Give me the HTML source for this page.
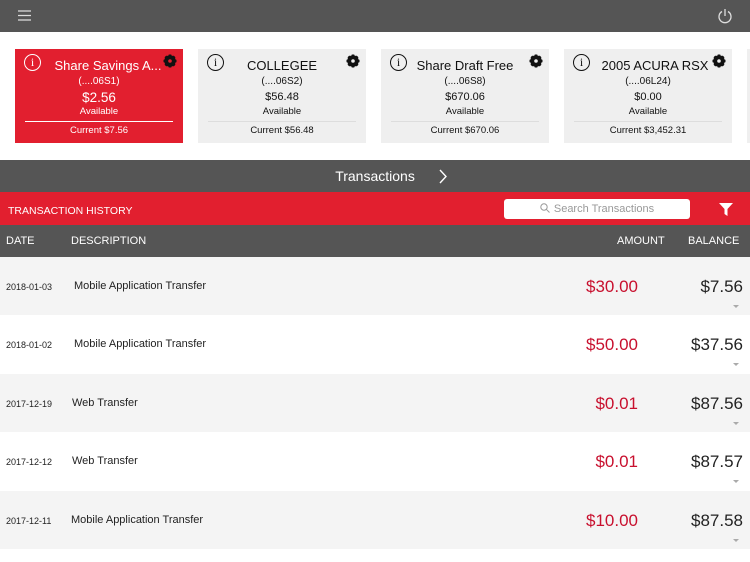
<!DOCTYPE html>
<html><head><meta charset="utf-8"><style>
*{margin:0;padding:0;box-sizing:border-box}
body{width:750px;height:562px;overflow:hidden;background:#fff;font-family:"Liberation Sans",Arial,sans-serif;position:relative}
.top{position:absolute;left:0;top:0;width:750px;height:32px;background:#555}
.card{position:absolute;top:49px;width:168px;height:94px;background:#efefef;color:#111;text-align:center}
.card.red{background:#e21f2f;color:#fff}
.card .t{position:absolute;top:9px;left:0;right:0;font-size:13px}
.card .n{position:absolute;top:27px;left:0;right:0;font-size:10px}
.card .a{position:absolute;top:41px;left:0;right:0;font-size:13.5px}
.card .av{position:absolute;top:57px;left:0;right:0;font-size:9.5px}
.card .ln{position:absolute;top:72px;left:10px;right:10px;height:1px;background:#ddd}
.card.red .ln{background:#fff}
.card .c{position:absolute;top:76px;left:0;right:0;font-size:9.5px}
.card .i{position:absolute;left:9px;top:5px;width:17px;height:17px;border:1px solid currentColor;border-radius:50%;font-size:12px;line-height:15px;font-family:"Liberation Serif",serif}
.card .g{position:absolute;right:6px;top:5px}
.bar{position:absolute;left:0;width:750px}
.row{position:absolute;left:0;width:750px;height:58px;color:#222}
.row .d{position:absolute;left:6px;top:25px;font-size:9px}
.row .ds{position:absolute;top:23px;font-size:11px}
.row .am{position:absolute;right:112px;top:20px;font-size:17px;color:#c8102e}
.row .b{position:absolute;right:7px;top:20px;font-size:17px;color:#222}
.row .tri{position:absolute;right:11px;top:48px;width:0;height:0;border-left:3px solid transparent;border-right:3px solid transparent;border-top:3px solid #aaa}
</style></head><body>
<svg width="0" height="0" style="position:absolute"><defs><g id="gear"><circle cx="7" cy="7" r="4.3" fill="none" stroke="currentColor" stroke-width="3"/><g stroke="currentColor" stroke-width="2.6"><path d="M7 0.5V13.5M0.5 7H13.5M2.4 2.4L11.6 11.6M11.6 2.4L2.4 11.6"/></g><circle cx="7" cy="7" r="1.8" fill="var(--bg)"/></g></defs></svg>
<div class="top">
<svg style="position:absolute;left:18px;top:10px" width="13" height="11"><path d="M0 1H13M0 5.5H13M0 10H13" stroke="#ddd" stroke-width="1.3"/></svg>
<svg style="position:absolute;left:717px;top:8px" width="16" height="16" viewBox="0 0 16 16"><path d="M5 3.5A6 6 0 1 0 11 3.5" fill="none" stroke="#ddd" stroke-width="1.3"/><path d="M8 1V8" stroke="#ddd" stroke-width="1.3"/></svg>
</div>
<div class="card red" style="left:15px;--bg:#e21f2f"><div class="i">i</div><div class="t" style="left:18px">Share Savings A...</div><svg class="g" width="14" height="14"><use href="#gear" style="color:#111"/></svg><div class="n">(....06S1)</div><div class="a">$2.56</div><div class="av">Available</div><div class="ln"></div><div class="c">Current $7.56</div></div>
<div class="card" style="left:198px;--bg:#efefef"><div class="i">i</div><div class="t">COLLEGEE</div><svg class="g" width="14" height="14"><use href="#gear"/></svg><div class="n">(....06S2)</div><div class="a" style="font-size:11px;top:42px">$56.48</div><div class="av">Available</div><div class="ln"></div><div class="c">Current $56.48</div></div>
<div class="card" style="left:381px;--bg:#efefef"><div class="i">i</div><div class="t">Share Draft Free</div><svg class="g" width="14" height="14"><use href="#gear"/></svg><div class="n">(....06S8)</div><div class="a" style="font-size:11px;top:42px">$670.06</div><div class="av">Available</div><div class="ln"></div><div class="c">Current $670.06</div></div>
<div class="card" style="left:564px;--bg:#efefef"><div class="i">i</div><div class="t" style="left:14px">2005 ACURA RSX</div><svg class="g" width="14" height="14"><use href="#gear"/></svg><div class="n">(....06L24)</div><div class="a" style="font-size:11px;top:42px">$0.00</div><div class="av">Available</div><div class="ln"></div><div class="c">Current $3,452.31</div></div>
<div class="card" style="left:747px"></div>
<div class="bar" style="top:160px;height:32px;background:#555;color:#fff;font-size:14px;text-align:center;line-height:32px">Transactions
<svg style="position:absolute;left:438px;top:9px" width="10" height="15"><path d="M2 1L8 7.5L2 14" fill="none" stroke="#fff" stroke-width="1.4"/></svg></div>
<div class="bar" style="top:192px;height:33px;background:#e21f2f;color:#fff;font-size:10.5px">
<div style="position:absolute;left:8px;top:13px">TRANSACTION HISTORY</div>
<div style="position:absolute;left:504px;top:7px;width:186px;height:20px;background:#fff;border-radius:3px;color:#999;font-size:11px;line-height:20px;text-align:center">
<svg width="10" height="10" style="vertical-align:-1px;margin-right:4px"><circle cx="4" cy="4" r="3.2" fill="none" stroke="#999" stroke-width="1"/><path d="M6.3 6.3L9.5 9.5" stroke="#999" stroke-width="1"/></svg>Search Transactions</div>
<svg style="position:absolute;left:719px;top:11px" width="14" height="13"><path d="M0 0H14L8.5 6V13L5.5 11V6Z" fill="#fff"/></svg>
</div>
<div class="bar" style="top:225px;height:32px;background:#555;color:#fff;font-size:11px;line-height:32px">
<span style="position:absolute;left:6px">DATE</span><span style="position:absolute;left:71px">DESCRIPTION</span><span style="position:absolute;left:617px">AMOUNT</span><span style="position:absolute;left:688px">BALANCE</span></div>
<div class="row" style="top:257px;background:#f4f4f4"><div class="d">2018-01-03</div><div class="ds" style="left:74px">Mobile Application Transfer</div><div class="am">$30.00</div><div class="b">$7.56</div><div class="tri"></div></div>
<div class="row" style="top:315px;background:#fff"><div class="d">2018-01-02</div><div class="ds" style="left:74px">Mobile Application Transfer</div><div class="am">$50.00</div><div class="b">$37.56</div><div class="tri"></div></div>
<div class="row" style="top:374px;background:#f4f4f4"><div class="d">2017-12-19</div><div class="ds" style="left:72px">Web Transfer</div><div class="am">$0.01</div><div class="b">$87.56</div><div class="tri"></div></div>
<div class="row" style="top:432px;background:#fff"><div class="d">2017-12-12</div><div class="ds" style="left:72px">Web Transfer</div><div class="am">$0.01</div><div class="b">$87.57</div><div class="tri"></div></div>
<div class="row" style="top:491px;background:#f4f4f4"><div class="d">2017-12-11</div><div class="ds" style="left:71px">Mobile Application Transfer</div><div class="am">$10.00</div><div class="b">$87.58</div><div class="tri"></div></div>
</body></html>
